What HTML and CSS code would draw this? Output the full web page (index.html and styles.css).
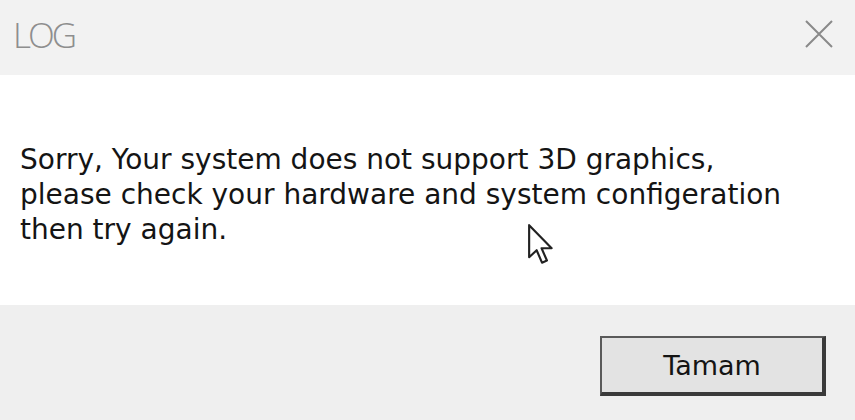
FILE: index.html
```html
<!DOCTYPE html>
<html>
<head>
  <meta charset="UTF-8">
  <title>LOG</title>
  <link rel="stylesheet" href="styles.css">
</head>
<body>
  <div class="dialog">
    <div class="titlebar">
      <span class="title">LOG</span>
      <svg class="close" width="28" height="28" viewBox="0 0 28 28">
        <path d="M1 1 L27 27 M27 1 L1 27" stroke="#8a8a8a" stroke-width="2" fill="none"/>
      </svg>
    </div>
    <div class="content">
      <p class="message">Sorry, Your system does not support 3D graphics,<br>please check your hardware and system configeration<br>then try again.</p>
      <svg class="cursor" width="30" height="45" viewBox="0 0 14 21">
        <path d="M1 1 L1 16 L4.5 12.7 L7 18.5 L9.3 17.5 L6.8 11.8 L11.5 11.8 Z" fill="#fff" stroke="#222" stroke-width="1" stroke-linejoin="round"/>
      </svg>
    </div>
    <div class="footer">
      <button class="ok">Tamam</button>
    </div>
  </div>
</body>
</html>
```
FILE: styles.css
```css
html, body {
  margin: 0;
  padding: 0;
}
body {
  width: 855px;
  height: 420px;
  overflow: hidden;
  font-family: "DejaVu Sans", sans-serif;
}
.dialog {
  display: flex;
  flex-direction: column;
  height: 420px;
}
.titlebar {
  height: 75px;
  background: #f2f2f2;
  display: flex;
  align-items: center;
  justify-content: space-between;
  padding: 0 22px 0 13px;
  box-sizing: border-box;
}
.title {
  font-family: "Open Sans", sans-serif;
  font-weight: 300;
  font-size: 35px;
  color: #8e8e8e;
  letter-spacing: -3px;
  margin-top: -6px;
}
.close {
  margin-top: -8px;
}
.content {
  position: relative;
  height: 230px;
  background: #fff;
  padding: 0 20px;
}
.message {
  margin: 0;
  padding-top: 67px;
  font-size: 28px;
  line-height: 35px;
  color: #141414;
}
.cursor {
  position: absolute;
  left: 527px;
  top: 148px;
}
.footer {
  flex: 1;
  background: #efefef;
  display: flex;
  justify-content: flex-end;
  align-items: flex-start;
  padding: 31px 29px 0 0;
}
.ok {
  width: 226px;
  height: 60px;
  background: #e3e3e3;
  border: 2px solid #5a5a5a;
  border-right: 4px solid #3a3a3a;
  border-bottom: 4px solid #3a3a3a;
  font-family: "DejaVu Sans", sans-serif;
  font-size: 27px;
  color: #141414;
  padding: 0;
}
```
